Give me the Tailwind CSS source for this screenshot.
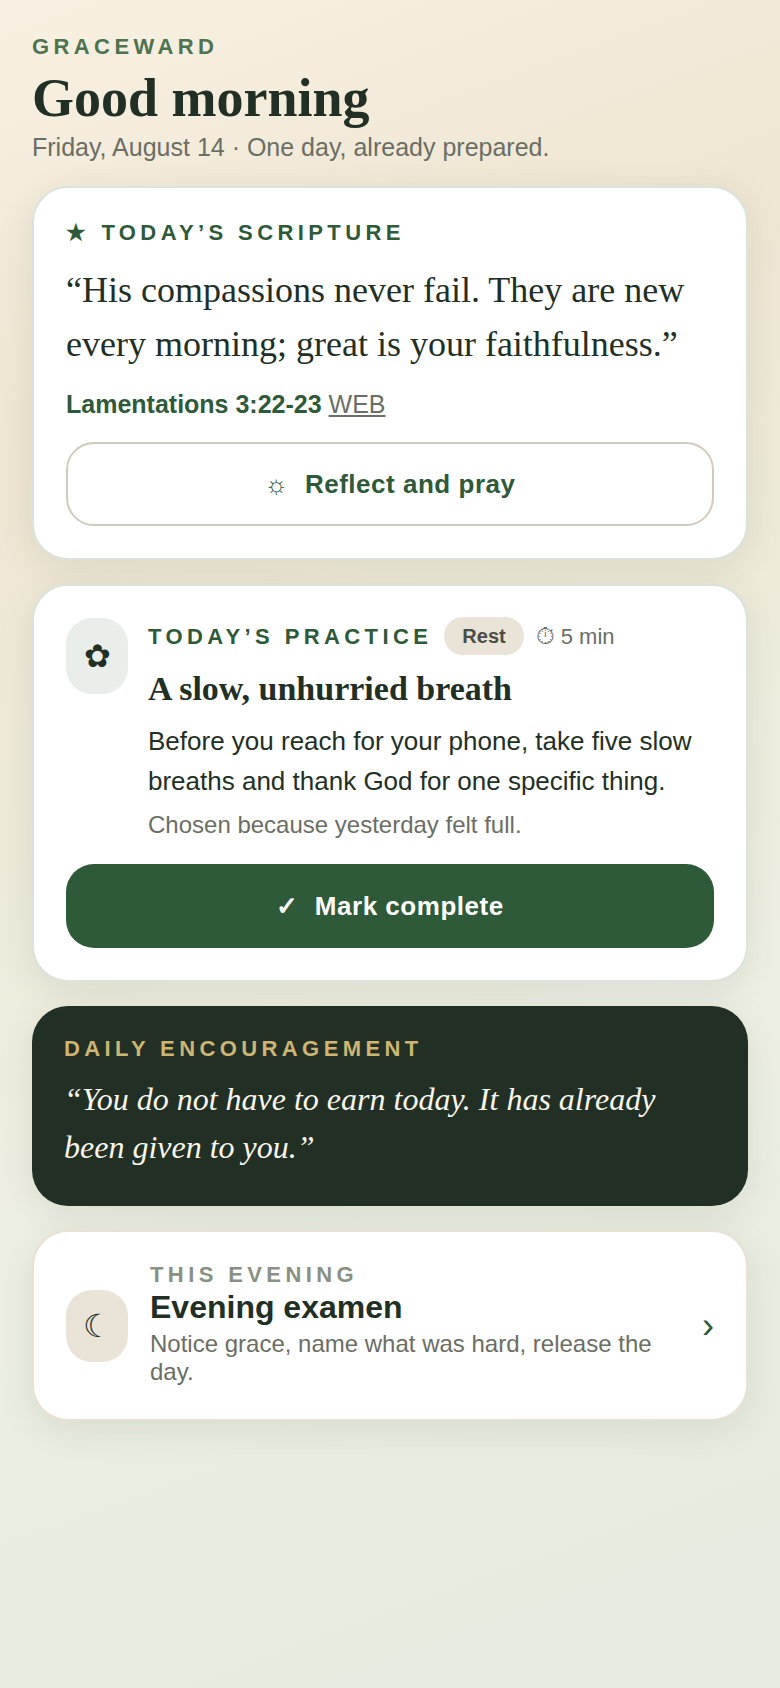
<!DOCTYPE html>
<html><head><meta charset="utf-8"><script src="https://cdn.jsdelivr.net/npm/@tailwindcss/browser@4"></script></head>
<body class="m-0">
<div class="w-[780px] min-h-[1688px] bg-[linear-gradient(160deg,#f8f1e3_0%,#efe6d3_22%,#edefe2_62%,#e5ebe1_100%)] px-8 pt-[33px] font-['Liberation_Sans',sans-serif] flex flex-col">
  <div class="text-[22px] leading-[28px] font-bold tracking-[0.2em] text-[#4f7350]">GRACEWARD</div>
  <h1 class="font-['Liberation_Serif',serif] font-bold text-[54px] leading-[60px] text-[#222f25] mt-[7px]">Good morning</h1>
  <p class="text-[25px] leading-[32px] text-[#6b6e64] mt-[3px]">Friday, August 14 · One day, already prepared.</p>

  <section class="mt-[23px] bg-white rounded-[36px] border-2 border-[#dce3dc] shadow-[0_8px_36px_rgba(60,70,50,0.1)] px-8 pt-[31px] pb-[32px]">
    <div class="flex items-center gap-[11px] text-[22px] leading-[28px] font-bold tracking-[0.2em] text-[#2f5a3a]"><span>★</span><span>TODAY’S SCRIPTURE</span></div>
    <p class="mt-[16px] font-['Liberation_Serif',serif] text-[36px] leading-[54px] text-[#222f25]">“His compassions never fail. They are new every morning; great is your faithfulness.”</p>
    <p class="mt-[17px] text-[25px] leading-[32px]"><span class="font-bold text-[#2f5a3a]">Lamentations 3:22-23</span> <span class="underline text-[#6b6e64]">WEB</span></p>
    <button class="mt-[22px] w-full h-[84px] pt-px rounded-[28px] border-2 border-[#d0cbbc] flex items-center justify-center gap-4 text-[26px] font-bold tracking-[0.02em] text-[#2f5a3a]"><span class="font-normal">☼</span><span>Reflect and pray</span></button>
  </section>

  <section class="mt-6 bg-white rounded-[36px] border-2 border-[#dce3dc] shadow-[0_8px_36px_rgba(60,70,50,0.1)] px-8 pt-[31px] pb-[32px]">
    <div class="flex gap-5">
      <div class="w-[62px] h-[76px] mt-px shrink-0 rounded-[26px] bg-[#e9eeea] flex items-center justify-center text-[32px] text-[#222f25]">✿</div>
      <div class="flex-1">
        <div class="flex items-center gap-3">
          <span class="text-[22px] font-bold tracking-[0.2em] text-[#2f5a3a]">TODAY’S PRACTICE</span>
          <span class="px-[18px] h-[38px] flex items-center rounded-full bg-[#e9e3d8] text-[20px] font-bold text-[#4a4e45]">Rest</span>
          <span class="flex items-center gap-[6px] text-[22px] text-[#6b6e64]"><span class="text-[24px]">⏱</span><span>5 min</span></span>
        </div>
        <h2 class="mt-3 font-['Liberation_Serif',serif] font-bold text-[34px] leading-[44px] text-[#222f25]">A slow, unhurried breath</h2>
        <p class="mt-[10px] text-[26px] leading-[40px] text-[#222f25]">Before you reach for your phone, take five slow breaths and thank God for one specific thing.</p>
        <p class="mt-2 text-[24px] leading-[32px] text-[#6b6e64]">Chosen because yesterday felt full.</p>
      </div>
    </div>
    <button class="mt-[23px] w-full h-[84px] pt-px rounded-[28px] bg-[#2f5a3a] flex items-center justify-center gap-4 text-[26px] font-bold tracking-[0.02em] text-white"><span>✓</span><span>Mark complete</span></button>
  </section>

  <section class="mt-6 bg-[#222f25] rounded-[36px] shadow-[0_8px_36px_rgba(60,70,50,0.1)] px-8 pt-7 pb-[35px]">
    <div class="text-[22px] leading-[30px] font-bold tracking-[0.2em] text-[#cdb574]">DAILY ENCOURAGEMENT</div>
    <p class="mt-[11px] font-['Liberation_Serif',serif] italic text-[32px] leading-[48px] text-[#f9f6ec]">“You do not have to earn today. It has already been given to you.”</p>
  </section>

  <section class="mt-6 bg-white rounded-[36px] border-2 border-[#e9e1d3] shadow-[0_8px_36px_rgba(60,70,50,0.1)] px-8 pt-[29px] pb-[28px] flex items-center gap-[22px]">
    <div class="w-[62px] h-[72px] shrink-0 rounded-[26px] bg-[#e9e3d8] flex items-center justify-center text-[32px] text-[#222f25]">☾</div>
    <div class="flex-1 pb-[5px]">
      <div class="text-[22px] leading-[28px] font-bold tracking-[0.2em] text-[#8a9082]">THIS EVENING</div>
      <div class="text-[32px] leading-[37px] font-bold text-[#222f25]">Evening examen</div>
      <div class="mt-1 text-[24px] leading-[28px] text-[#6b6e64]">Notice grace, name what was hard, release the day.</div>
    </div>
    <span class="text-[36px] text-[#2f5a3a]">›</span>
  </section>
</div>
</body></html>
